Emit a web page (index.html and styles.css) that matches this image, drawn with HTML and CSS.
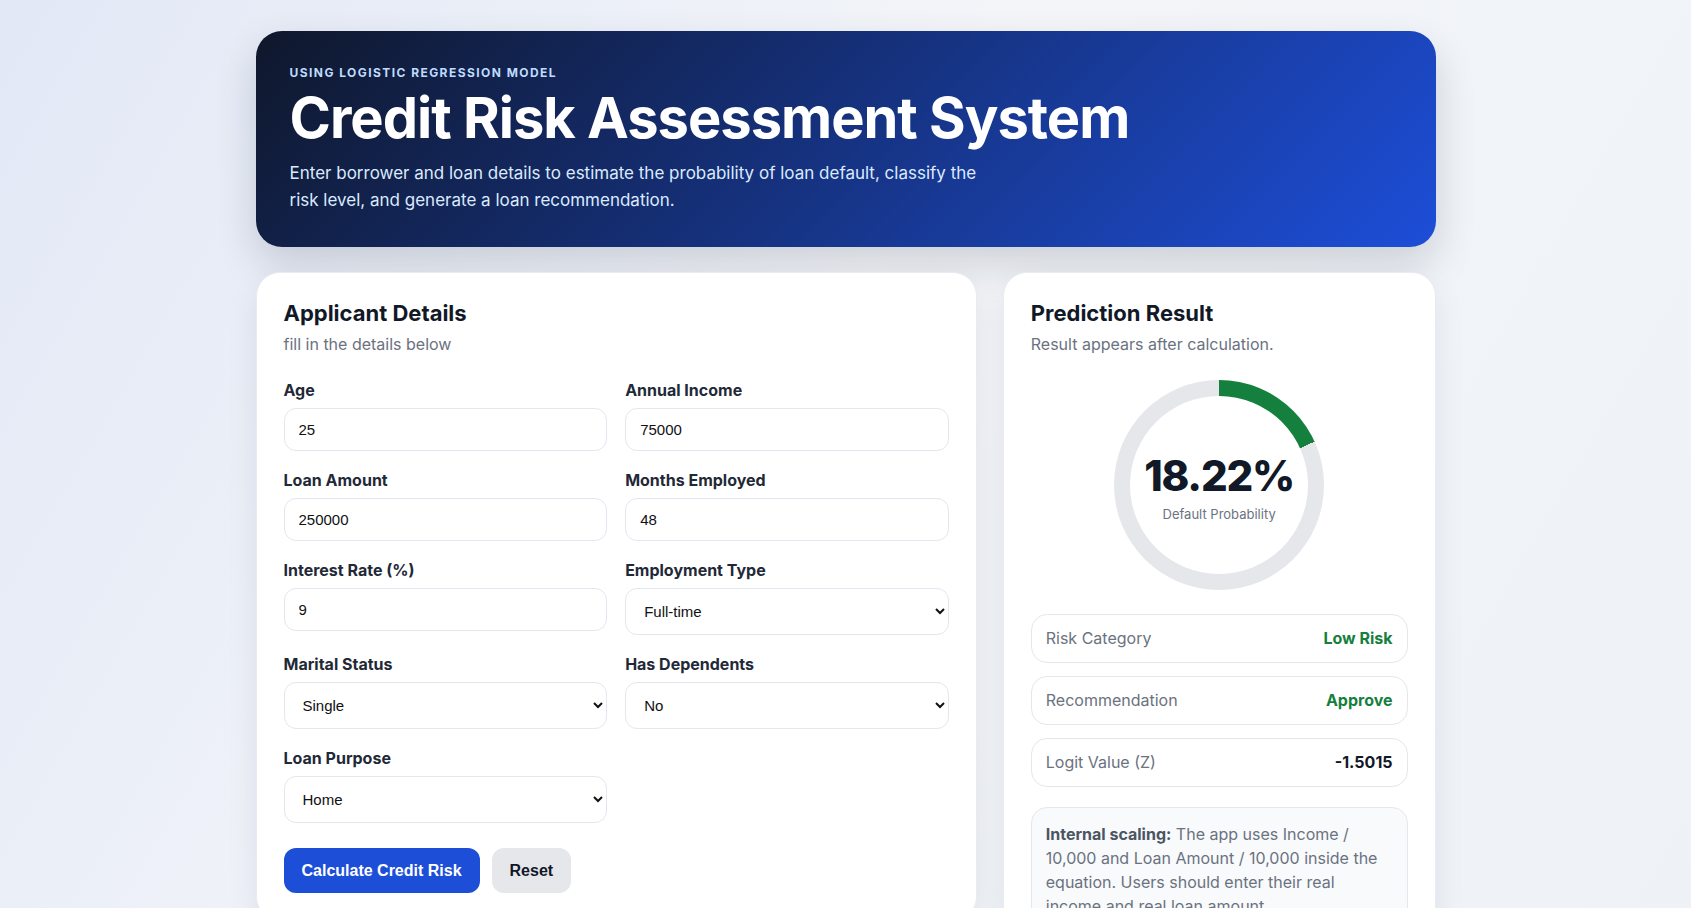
FILE: index.html
```html
<!DOCTYPE html>
<html lang="en">
<head>
    <meta charset="UTF-8">
    <meta name="viewport" content="width=device-width, initial-scale=1.0">
    <title>Credit Risk Assessment System</title>
    <link rel="stylesheet" href="styles.css">
</head>
<body>
    <div class="page">
        <header class="hero">
            <p class="eyebrow">Using Logistic Regression Model</p>
            <h1>Credit Risk Assessment System</h1>
            <p class="lead">Enter borrower and loan details to estimate the probability of loan default, classify the risk level, and generate a loan recommendation.</p>
        </header>

        <main class="layout">
            <!-- Input form -->
            <section class="card">
                <h2>Applicant Details</h2>
                <p class="card-sub">fill in the details below</p>

                <form id="risk-form">
                    <div class="form-grid">
                        <div class="field">
                            <label for="age">Age</label>
                            <input type="number" id="age" value="25">
                        </div>
                        <div class="field">
                            <label for="income">Annual Income</label>
                            <input type="number" id="income" value="75000">
                        </div>
                        <div class="field">
                            <label for="loan_amount">Loan Amount</label>
                            <input type="number" id="loan_amount" value="250000">
                        </div>
                        <div class="field">
                            <label for="months_employed">Months Employed</label>
                            <input type="number" id="months_employed" value="48">
                        </div>
                        <div class="field">
                            <label for="interest_rate">Interest Rate (%)</label>
                            <input type="number" id="interest_rate" step="0.1" value="9">
                        </div>
                        <div class="field">
                            <label for="employment_type">Employment Type</label>
                            <select id="employment_type">
                                <option>Full-time</option>
                                <option>Part-time</option>
                                <option>Self-employed</option>
                                <option>Unemployed</option>
                            </select>
                        </div>
                        <div class="field">
                            <label for="marital_status">Marital Status</label>
                            <select id="marital_status">
                                <option>Single</option>
                                <option>Married</option>
                                <option>Divorced</option>
                            </select>
                        </div>
                        <div class="field">
                            <label for="has_dependents">Has Dependents</label>
                            <select id="has_dependents">
                                <option>No</option>
                                <option>Yes</option>
                            </select>
                        </div>
                        <div class="field">
                            <label for="loan_purpose">Loan Purpose</label>
                            <select id="loan_purpose">
                                <option>Home</option>
                                <option>Auto</option>
                                <option>Education</option>
                                <option>Business</option>
                                <option>Other</option>
                            </select>
                        </div>
                    </div>

                    <div class="actions">
                        <button type="submit" class="btn btn-primary">Calculate Credit Risk</button>
                        <button type="reset" class="btn btn-secondary">Reset</button>
                    </div>
                </form>
            </section>

            <!-- Result panel -->
            <section class="card">
                <h2>Prediction Result</h2>
                <p class="card-sub">Result appears after calculation.</p>

                <div class="gauge" style="--value: 18.22%;">
                    <div class="gauge-inner">
                        <div class="gauge-value">18.22%</div>
                        <div class="gauge-label">Default Probability</div>
                    </div>
                </div>

                <div class="stat-list">
                    <div class="stat">
                        <span class="stat-label">Risk Category</span>
                        <span class="stat-value good">Low Risk</span>
                    </div>
                    <div class="stat">
                        <span class="stat-label">Recommendation</span>
                        <span class="stat-value good">Approve</span>
                    </div>
                    <div class="stat">
                        <span class="stat-label">Logit Value (Z)</span>
                        <span class="stat-value">-1.5015</span>
                    </div>
                </div>

                <div class="note">
                    <strong>Internal scaling:</strong> The app uses Income / 10,000 and Loan Amount / 10,000 inside the equation. Users should enter their real income and real loan amount.
                </div>
            </section>
        </main>
    </div>
</body>
</html>
```

FILE: styles.css
```css
body {
    margin: 0;
    font-family: Inter, "Noto Sans", sans-serif;
    color: #111827;
    background: linear-gradient(120deg, #e2e8f6 0%, #f3f5f9 45%, #eef2f7 100%);
    min-height: 100vh;
}

.page {
    max-width: 1180px;
    margin: 0 auto;
    padding: 31px 0 40px;
}

/* Header */
.hero {
    padding: 34px 34px 33px;
    border-radius: 26px;
    background: linear-gradient(135deg, #0f172a 0%, #1d4ed8 100%);
    color: white;
    box-shadow: 0 18px 40px rgba(15, 23, 42, 0.16);
}

.eyebrow {
    margin: 0 0 8px;
    font-size: 12px;
    font-weight: 700;
    letter-spacing: 0.12em;
    text-transform: uppercase;
    color: #bfdbfe;
}

.hero h1 {
    margin: 0 0 10px;
    font-size: 56px;
    line-height: 1.1;
    font-weight: 700;
    letter-spacing: -1px;
}

.lead {
    margin: 0;
    max-width: 700px;
    font-size: 17px;
    line-height: 27px;
    color: #dbeafe;
}

/* Main layout */
.layout {
    display: grid;
    grid-template-columns: 5fr 3fr;
    gap: 26px;
    margin-top: 25px;
    align-items: start;
}

.card {
    background: white;
    border: 1px solid #e8ecf2;
    border-radius: 24px;
    padding: 27px;
    box-shadow: 0 12px 32px rgba(15, 23, 42, 0.08);
}

.card h2 {
    margin: 0;
    font-size: 22px;
    line-height: 1.2;
    font-weight: 700;
    color: #111827;
}

.card-sub {
    margin: 7px 0 0;
    font-size: 16px;
    line-height: 22px;
    color: #6b7280;
}

/* Form */
.form-grid {
    display: grid;
    grid-template-columns: 1fr 1fr;
    gap: 19px 18px;
    margin-top: 25px;
}

.field label {
    display: block;
    margin-bottom: 8px;
    font-size: 16px;
    line-height: 20px;
    font-weight: 700;
    color: #1f2937;
}

.field input,
.field select {
    width: 100%;
    box-sizing: border-box;
    padding: 12px 14px;
    border: 1px solid #e2e8f0;
    border-radius: 12px;
    background: white;
    color: #111;
    font-family: "Liberation Sans", Arial, sans-serif;
    font-size: 15px;
    line-height: 17px;
}

.field select {
    height: 47px;
}

.field input:focus,
.field select:focus {
    outline: none;
    border-color: #1d4ed8;
}

.actions {
    display: flex;
    gap: 12px;
    margin-top: 25px;
}

.btn {
    padding: 13px 18px;
    border: none;
    border-radius: 12px;
    font-family: "Liberation Sans", Arial, sans-serif;
    font-size: 16px;
    line-height: 19px;
    font-weight: 700;
    cursor: pointer;
}

.btn-primary {
    background: #1d4ed8;
    color: white;
}

.btn-secondary {
    background: #e5e7eb;
    color: #111827;
}

/* Result */
.gauge {
    width: 210px;
    height: 210px;
    margin: 25px auto 0;
    border-radius: 50%;
    background: conic-gradient(#15803d var(--value), #e5e7eb 0);
    display: flex;
    align-items: center;
    justify-content: center;
}

.gauge-inner {
    box-sizing: border-box;
    width: 178px;
    height: 178px;
    padding-top: 7px;
    border-radius: 50%;
    background: white;
    display: flex;
    flex-direction: column;
    align-items: center;
    justify-content: center;
}

.gauge-value {
    font-size: 42px;
    line-height: 1;
    font-weight: 800;
    letter-spacing: -0.03em;
    color: #111827;
}

.gauge-label {
    margin-top: 9px;
    font-size: 13px;
    color: #6b7280;
}

.stat-list {
    display: flex;
    flex-direction: column;
    gap: 13px;
    margin-top: 24px;
}

.stat {
    display: flex;
    justify-content: space-between;
    align-items: center;
    padding: 13px 14px;
    border: 1px solid #e5e7eb;
    border-radius: 16px;
    font-size: 16px;
    line-height: 21px;
}

.stat-label {
    color: #6b7280;
}

.stat-value {
    font-weight: 700;
    color: #111827;
}

.stat-value.good {
    color: #15803d;
}

.note {
    margin-top: 20px;
    padding: 14px;
    background: #f8fafc;
    border: 1px solid #e5e7eb;
    border-radius: 16px;
    font-size: 16px;
    line-height: 24px;
    color: #6b7280;
}

.note strong {
    color: #4b5563;
}
```
